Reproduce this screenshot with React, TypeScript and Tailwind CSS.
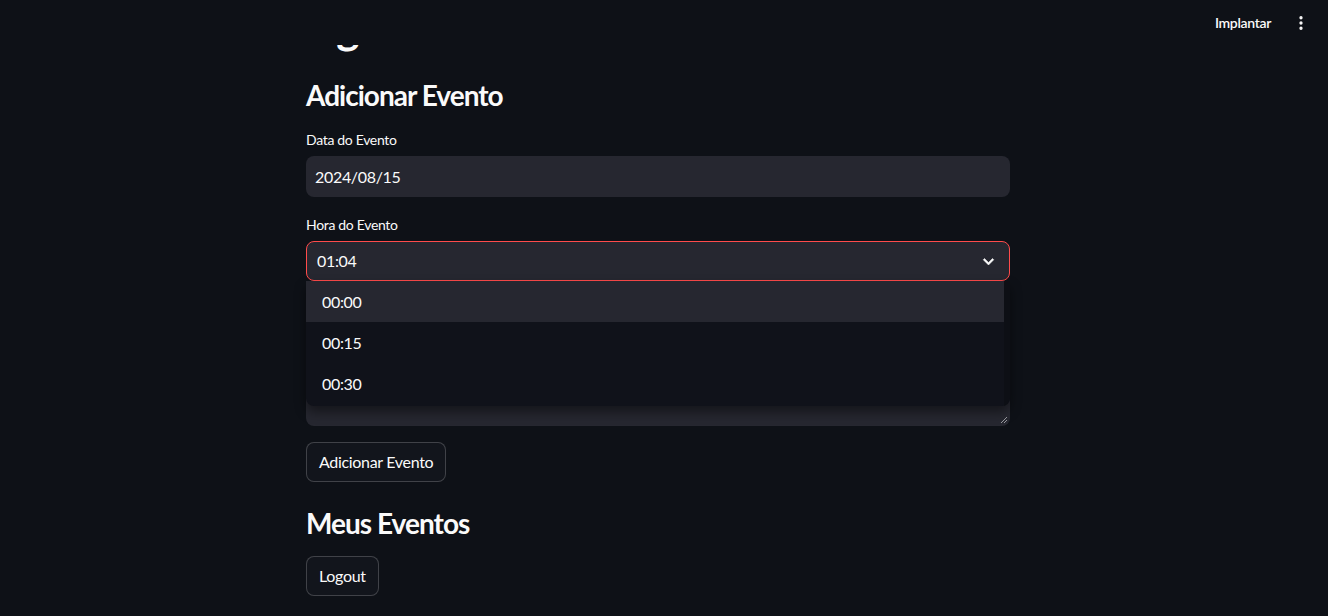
import { EllipsisVertical } from 'lucide-react';

const times = ['00:00', '00:15', '00:30'];

function ExpandMore() {
  return (
    <svg width="21" height="21" viewBox="0 0 24 24" fill="#fafafa" stroke="#fafafa" strokeWidth="0.6">
      <path d="M16.59 8.59L12 13.17 7.41 8.59 6 10l6 6 6-6z" />
    </svg>
  );
}

function FieldLabel({ children, hidden }: { children: string; hidden?: boolean }) {
  return <label className={`flex h-6 items-center text-sm text-[#fafafa] ${hidden ? 'invisible' : ''}`}>{children}</label>;
}

export default function App() {
  return (
    <div className="relative min-h-[616px] overflow-hidden bg-[#0e1117] font-['Source_Sans_Pro',Lato,sans-serif] tracking-[-0.02em] text-[#fafafa]">
      <header className="absolute inset-x-0 top-0 z-20 flex h-[45px] items-center justify-end gap-[18px] bg-[#0e1117] pr-[15px]">
        <span className="text-sm font-semibold">Implantar</span>
        <button className="flex h-6 w-6 items-center justify-center text-[#fafafa]">
          <EllipsisVertical size={18} strokeWidth={2.4} />
        </button>
      </header>

      <main className="pr-3">
        <div className="mx-auto flex w-[704px] flex-col">
          <h1 className="mt-px text-[44px] leading-[53px] font-bold">Agenda</h1>

          <h3 className="mt-6 text-[28px] leading-[34px] font-bold tracking-[-0.035em]">Adicionar Evento</h3>

          <div className="mt-4">
            <FieldLabel>Data do Evento</FieldLabel>
            <div className="mt-1 flex h-[41px] items-center rounded-lg bg-[#262730] px-[9px] text-base">2024/08/15</div>
          </div>

          <div className="relative mt-4">
            <FieldLabel>Hora do Evento</FieldLabel>
            <div className="mt-1 flex h-10 items-center justify-between rounded-lg border border-[#ff4b4b] bg-[#262730] pr-[10px] pl-[10px] text-base">
              <span>01:04</span>
              <ExpandMore />
            </div>

            {/* open dropdown list over the next field */}
            <div className="absolute top-[68px] left-0 z-10 flex h-[125px] w-full overflow-hidden rounded-b-lg bg-[#10121a] shadow-[0_6px_12px_rgba(0,0,0,0.45)]">
              <ul className="flex-1">
                {times.map((time, index) => (
                  <li key={time} className={`flex h-[41px] items-center pl-4 text-base ${index === 0 ? 'bg-[#262730]' : ''}`}>
                    {time}
                  </li>
                ))}
              </ul>
              <div className="w-[6px] bg-[#0d0f15]" />
            </div>
          </div>

          <div className="mt-4">
            <FieldLabel hidden>Descrição do Evento</FieldLabel>
            <div className="relative mt-1 h-[101px] rounded-lg bg-[#262730]">
              <svg className="absolute right-[2px] bottom-[2px]" width="8" height="8" viewBox="0 0 8 8" stroke="#9a9ba0" strokeWidth="1">
                <path d="M1 7L7 1M4 7L7 4" />
              </svg>
            </div>
          </div>

          <button className="mt-4 h-10 self-start rounded-lg border border-[#fafafa33] bg-[#12151c] px-3 text-base">Adicionar Evento</button>

          <h3 className="mt-6 text-[28px] leading-[34px] font-bold tracking-[-0.035em]">Meus Eventos</h3>

          <button className="mt-4 h-10 self-start rounded-lg border border-[#fafafa33] bg-[#12151c] px-3 text-base">Logout</button>
        </div>
      </main>
    </div>
  );
}
